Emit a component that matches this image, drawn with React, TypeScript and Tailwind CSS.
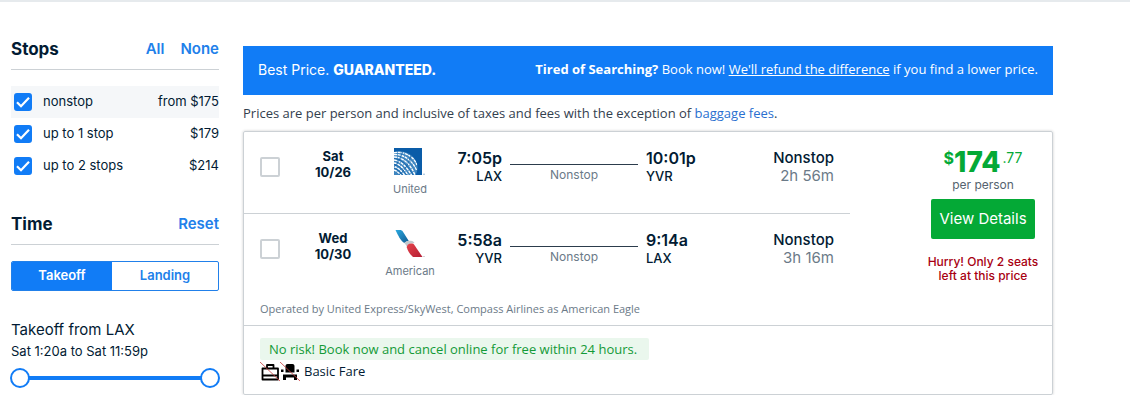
import React, { useState } from 'react';

interface StopOption {
  id: string;
  label: string;
  price: string;
}

interface Leg {
  day: string;
  date: string;
  airline: 'United' | 'American';
  departTime: string;
  departCode: string;
  arriveTime: string;
  arriveCode: string;
  duration: string;
}

const stopOptions: StopOption[] = [
  { id: 'nonstop', label: 'nonstop', price: 'from $175' },
  { id: 'one', label: 'up to 1 stop', price: '$179' },
  { id: 'two', label: 'up to 2 stops', price: '$214' },
];

const legs: Leg[] = [
  { day: 'Sat', date: '10/26', airline: 'United', departTime: '7:05p', departCode: 'LAX', arriveTime: '10:01p', arriveCode: 'YVR', duration: '2h 56m' },
  { day: 'Wed', date: '10/30', airline: 'American', departTime: '5:58a', departCode: 'YVR', arriveTime: '9:14a', arriveCode: 'LAX', duration: '3h 16m' },
];

const UnitedLogo = () => (
  <svg viewBox="0 0 32 28" className="h-7 w-8" aria-hidden="true">
    <defs>
      <clipPath id="united-globe">
        <path d="M0 4C10 1 22 7 23.500 18c.2 4-.6 6.500-2 9H0z" />
      </clipPath>
    </defs>
    <path fill="#0a5ca8" d="M0 0h28v27H0z" />
    <g clipPath="url(#united-globe)" fill="none">
      <path fill="#3f86c0" d="M0 0h28v27H0z" />
      <path stroke="#fff" strokeWidth="1.400" strokeDasharray="3 .7" d="M0 4.500C9 3 20 8 23 17M0 6.500C9 6 18 12 22.500 22M0 9C8 9 16 15 21 27M0 12c7 1 13 7 18 16M0 15c6 1 10 6 14.500 13M0 18.500c4 1 8 5 11 9.500M0 22c3 1 5 3 7.500 6" />
      <path stroke="#0a5ca8" strokeWidth=".7" d="M0 10.500c8 1 13 6 19.500 17M0 16.500c5 1 9 5 13 11M0 20.500c4 1 7 4 9 7M9 3c-2 6-5 12-9 16M17 7c-2 8-6 15-12 20" />
    </g>
    <circle cx="30" cy="26.300" r=".8" fill="#8ab0d3" />
  </svg>
);

const AmericanLogo = () => (
  <svg viewBox="0 0 32 28" className="h-7 w-8" aria-hidden="true">
    <defs>
      <linearGradient id="aa-blue" x1="0" y1="0" x2="1" y2="1">
        <stop offset="0" stopColor="#2aa9e0" />
        <stop offset="1" stopColor="#125a91" />
      </linearGradient>
      <linearGradient id="aa-red" x1="0" y1="0" x2="1" y2="1">
        <stop offset="0" stopColor="#e4434a" />
        <stop offset="1" stopColor="#b51f35" />
      </linearGradient>
    </defs>
    <path fill="url(#aa-blue)" d="M1.500 0h4.300c1.500 0 2.300.5 3 1.500l6 9.500c-1.800.2-3.300.8-4.500 2C6.500 10.500 4 5.500 1.500 0z" />
    <path fill="#c3c9ce" d="M10.300 13c2-2 5-2.400 7.700-2 .9.300 1.900 1 2.500 2l-3.500.6c-2.400.3-3.800 1.600-4 3.700-.6-1.700-1.400-3.200-2.700-4.300z" />
    <path fill="url(#aa-red)" d="M12.800 17.500c0-2.500 1.700-3.900 4.400-3.900h1c.9 0 1.500.4 2 1.100L28.500 27h-9.500c-2.800-2.600-5-5.600-6.200-9.500z" />
    <circle cx="30" cy="26.500" r=".6" fill="#9aa4ad" />
  </svg>
);

const NoBagIcon = () => (
  <svg viewBox="0 0 20 20" className="size-5" aria-hidden="true">
    <path fill="none" stroke="#000" strokeWidth="1.800" strokeLinejoin="round" d="M2.500 6.500h15.500v11H2.500zM7 6V3h6.500v3M2.500 13.500H18" />
    <path stroke="#c83c3c" strokeWidth=".8" d="M0 0l20 19" />
  </svg>
);

const NoSeatIcon = () => (
  <svg viewBox="0 0 20 20" className="size-5" aria-hidden="true">
    <path d="M3 12.500h14V18h-3v-2.500H6V18H3zM1 7.500h2.500v2.500H1zM16.500 7.500H19v2.500h-2.500zM5.500 10.500V4c0-1.100.9-2 2-2h5c1.100 0 2 .9 2 2v6.500z" />
    <path stroke="#c83c3c" strokeWidth=".8" d="M0 0l20 19" />
  </svg>
);

const StopRow: React.FC<{ option: StopOption; checked: boolean; onToggle: () => void; active: boolean }> = ({ option, checked, onToggle, active }) => (
  <label className={`flex h-8 items-center pl-[3px] text-[13px] ${active ? 'bg-[#f5f7f9]' : ''}`}>
    <span className="grid size-[18px]">
      <input
        type="checkbox"
        checked={checked}
        onChange={onToggle}
        className="col-start-1 row-start-1 size-[18px] appearance-none rounded-[3px] border-2 border-[#cdd2d6] checked:border-[#117cf6] checked:bg-[#117cf6]"
      />
      {checked && (
        <svg viewBox="0 0 18 18" className="pointer-events-none col-start-1 row-start-1 size-[18px]" aria-hidden="true">
          <path d="M3 9.200l4 4 8-8.500" fill="none" stroke="#fff" strokeWidth="2.200" />
        </svg>
      )}
    </span>
    <span className="ml-[11px] flex-1">{option.label}</span>
    <span>{option.price}</span>
  </label>
);

const LegRow: React.FC<{ leg: Leg; divider: boolean }> = ({ leg, divider }) => (
  <div className={`grid grid-cols-[20px_106px_48px_68px_144px_1fr_auto] px-4 py-4 ${divider ? 'border-b border-[#ccd1d5]' : ''}`}>
    <input
      type="checkbox"
      aria-label={`Select ${leg.day} ${leg.date} flight`}
      className="mt-[9px] size-5 appearance-none rounded-[2px] border-2 border-[#ccd1d5] bg-white checked:bg-[#117cf6]"
    />
    <div className="text-center text-[13px] leading-4 font-bold">
      <div>{leg.day}</div>
      <div>{leg.date}</div>
    </div>
    <div className="flex flex-col items-center gap-[5px]">
      {leg.airline === 'United' ? <UnitedLogo /> : <AmericanLogo />}
      <span className="text-[11px] leading-4 text-[#6b7a88]">{leg.airline}</span>
    </div>
    <div className="text-right">
      <div className="text-[16px] leading-5 font-semibold">{leg.departTime}</div>
      <div className="text-[13px] leading-4 font-medium">{leg.departCode}</div>
    </div>
    <div className="px-2 text-center">
      <div className="h-[17px] border-b border-[#2c3c4c]"></div>
      <div className="pt-0.5 text-[12px] leading-4 text-[#6b7a88]">Nonstop</div>
    </div>
    <div>
      <div className="text-[16px] leading-5 font-semibold">{leg.arriveTime}</div>
      <div className="text-[13px] leading-4 font-medium">{leg.arriveCode}</div>
    </div>
    <div className="pt-px text-right text-[15px] leading-[18px]">
      <div className="font-medium">Nonstop</div>
      <div className="text-[#6b7a88]">{leg.duration}</div>
    </div>
  </div>
);

const thumb =
  'pointer-events-none col-start-1 row-start-1 h-5 w-full appearance-none bg-transparent [&::-webkit-slider-thumb]:pointer-events-auto [&::-webkit-slider-thumb]:size-5 [&::-webkit-slider-thumb]:appearance-none [&::-webkit-slider-thumb]:rounded-full [&::-webkit-slider-thumb]:border-2 [&::-webkit-slider-thumb]:border-[#117cf6] [&::-webkit-slider-thumb]:bg-white';

// longer copy is set in the softer face
const copy = "font-['Open_Sans','Liberation_Sans',sans-serif]";

const App: React.FC = () => {
  const [selected, setSelected] = useState<string[]>(stopOptions.map(o => o.id));
  const [tab, setTab] = useState<'Takeoff' | 'Landing'>('Takeoff');
  const [range, setRange] = useState([0, 100]);

  const toggle = (id: string) =>
    setSelected(selected.includes(id) ? selected.filter(s => s !== id) : [...selected, id]);

  return (
    <div className="border-t-2 border-[#e6eaed] bg-white font-['Inter','Liberation_Sans',sans-serif] text-[#021b33]">
      <div className="flex gap-6 pr-[77px] pl-[11px]">
        <aside className="w-52 shrink-0 pt-[35px]">
          <div className="flex items-center gap-4 border-b border-[#ccd1d5] pb-2 text-[15px] leading-6 font-semibold text-[#2180ea]">
            <h2 className="flex-1 text-[17px] font-bold text-[#021b33]">Stops</h2>
            <button type="button" onClick={() => setSelected(stopOptions.map(o => o.id))}>All</button>
            <button type="button" onClick={() => setSelected([])}>None</button>
          </div>
          <div className="pt-4">
            {stopOptions.map((option, i) => (
              <StopRow
                key={option.id}
                option={option}
                active={i === 0}
                checked={selected.includes(option.id)}
                onToggle={() => toggle(option.id)}
              />
            ))}
          </div>

          <div className="mt-[30px] flex items-center border-b border-[#ccd1d5] pb-2 text-[15px] leading-6 font-semibold text-[#2180ea]">
            <h2 className="flex-1 text-[17px] font-bold text-[#021b33]">Time</h2>
            <button type="button" onClick={() => setRange([0, 100])}>Reset</button>
          </div>
          <div className="mt-4 flex h-[30px] overflow-hidden rounded-[2px] border border-[#2180ea] text-[13px] font-semibold">
            {(['Takeoff', 'Landing'] as const).map(name => (
              <button
                key={name}
                type="button"
                onClick={() => setTab(name)}
                className={`${name === 'Takeoff' ? 'w-[100px]' : 'flex-1'} ${tab === name ? 'bg-[#117cf6] text-white' : 'text-[#2180ea]'}`}
              >
                {name}
              </button>
            ))}
          </div>
          <h3 className="mt-7 text-[15px] leading-[22px]">Takeoff from LAX</h3>
          <p className="text-[13px] leading-5">Sat 1:20a to Sat 11:59p</p>
          <div className="-mx-px mt-[7px] grid items-center">
            <div className="col-start-1 row-start-1 mx-2 h-1 bg-[#117cf6]"></div>
            <input type="range" aria-label="Earliest takeoff" className={thumb} value={range[0]} onChange={e => setRange([Math.min(+e.target.value, range[1]), range[1]])} />
            <input type="range" aria-label="Latest takeoff" className={thumb} value={range[1]} onChange={e => setRange([range[0], Math.max(+e.target.value, range[0])])} />
          </div>
        </aside>

        <main className="min-w-0 flex-1 pt-11">
          <div className="flex h-[49px] items-center justify-between bg-[#117cf6] px-[15px] pb-0.5 text-white">
            <p className="text-[14px]">Best Price. <strong className="font-extrabold">GUARANTEED.</strong></p>
            <p className={`text-[13px] ${copy}`}>
              <strong className="font-bold">Tired of Searching?</strong> Book now! <a href="#refund" className="underline">We'll refund the difference</a> if you find a lower price.
            </p>
          </div>
          <p className={`py-2 text-[13px] leading-5 text-[#33404e] ${copy}`}>
            Prices are per person and inclusive of taxes and fees with the exception of <a href="#baggage" className="text-[#2a6fd0]">baggage fees</a>.
          </p>

          <section className="rounded-[2px] border border-[#ccd1d5] shadow-[0_0_3px_rgba(0,0,0,0.2)]">
            <div className="flex border-b border-[#ccd1d5]">
              <div className="flex-1">
                {legs.map((leg, i) => (
                  <LegRow key={leg.date} leg={leg} divider={i === 0} />
                ))}
                <p className={`px-4 pt-1.5 pb-2 text-[11px] leading-4 text-[#6b7a88] ${copy}`}>
                  Operated by United Express/SkyWest, Compass Airlines as American Eagle
                </p>
              </div>
              <div className="ml-16 flex w-[138px] shrink-0 flex-col items-center pt-4 text-center">
                <div className="flex items-start text-[#04a936]">
                  <span className="text-[16px] leading-5 font-bold">$</span>
                  <span className="text-[28px] leading-7 font-extrabold">174</span>
                  <span className="ml-0.5 text-[14px] leading-5">.77</span>
                </div>
                <span className="text-[12px] leading-[18px] text-[#55636f]">per person</span>
                <button type="button" className="mt-[5px] h-10 w-[104px] rounded-[2px] bg-[#04a936] text-[15px] text-white">
                  View Details
                </button>
                <p className="mt-4 text-[12px] leading-[14px] font-medium text-[#a80012]">
                  Hurry! Only 2 seats<br />left at this price
                </p>
              </div>
            </div>
            <div className={`px-4 py-3 ${copy}`}>
              <p className="w-fit rounded-[2px] bg-[#eaf7ed] pr-3 pl-[9px] text-[13px] leading-[22px] font-medium text-[#139a37]">
                No risk! Book now and cancel online for free within 24 hours.
              </p>
              <div className="mt-0.5 flex h-5 items-center text-[13px]">
                <NoBagIcon />
                <NoSeatIcon />
                <span className="ml-1">Basic Fare</span>
              </div>
            </div>
          </section>
        </main>
      </div>
    </div>
  );
};

export default App;
